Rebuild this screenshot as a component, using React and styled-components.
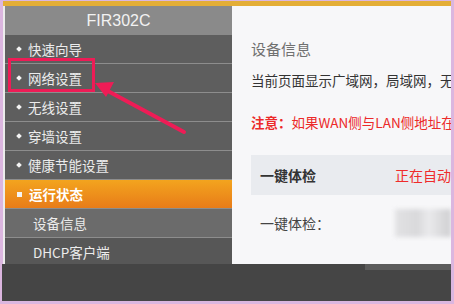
import React from "react";
import styled, { createGlobalStyle } from "styled-components";

const Global = createGlobalStyle`
  html, body { margin: 0; padding: 0; }
  body {
    width: 454px;
    height: 304px;
    overflow: hidden;
    background: #dbb6df;
    font-family: "Noto Sans CJK SC", "Liberation Sans", sans-serif;
  }
`;

const Frame = styled.div`
  position: relative;
  width: 454px;
  height: 304px;
  padding: 1px 3px 3px 3px;
  box-sizing: border-box;
  display: flex;
  flex-direction: column;
  overflow: hidden;
`;

const TopStrip = styled.div`
  height: 5px;
  background: #e4ae36;
  flex-shrink: 0;
`;

const Main = styled.div`
  flex: 1;
  display: flex;
  overflow: hidden;
`;

const Sidebar = styled.div`
  width: 227px;
  flex-shrink: 0;
  background: #5e5e5e;
  border-left: 2px solid #ececec;
  display: flex;
  flex-direction: column;
`;

const Brand = styled.div`
  height: 29px;
  background: #8a8a8a;
  color: #f2f2f2;
  font-family: "Liberation Sans", sans-serif;
  font-size: 16px;
  display: flex;
  align-items: center;
  justify-content: center;
`;

const Item = styled.div`
  height: 28px;
  border-bottom: 1px solid ${p => (p.$last ? "transparent" : "#8d8d8d")};
  background: ${p =>
    p.$active
      ? "linear-gradient(#f3a41e, #e87c19)"
      : p.$sub
      ? p.$light
        ? "#6b6b6b"
        : "#575757"
      : "#5e5e5e"};
  color: ${p => (p.$active ? "#fff" : "#ececec")};
  font-weight: ${p => (p.$active ? 700 : 400)};
  font-size: 13.5px;
  display: flex;
  align-items: center;
  padding-left: ${p => (p.$sub ? "28px" : "12px")};
  gap: 7px;
`;

const Bullet = styled.span`
  width: ${p => (p.$square ? "5px" : "4px")};
  height: ${p => (p.$square ? "5px" : "4px")};
  background: #f4f4f4;
  transform: ${p => (p.$square ? "none" : "rotate(45deg)")};
`;

const Content = styled.div`
  flex: 1;
  background: #f7f7f9;
  padding: 32px 0 0 19px;
  overflow: hidden;
  white-space: nowrap;
`;

const Title = styled.div`
  font-size: 15px;
  color: #707070;
  height: 22px;
  line-height: 22px;
`;

const Desc = styled.div`
  margin-top: 10px;
  font-size: 13.5px;
  color: #333;
  line-height: 20px;
`;

const Note = styled.div`
  margin-top: 22px;
  font-size: 13.5px;
  color: #ec2a2a;
  line-height: 20px;
  b { font-weight: 700; }
`;

const Table = styled.div`
  margin-top: 23px;
  display: flex;
  flex-direction: column;
  gap: 8px;
`;

const Row = styled.div`
  height: 40px;
  flex-shrink: 0;
  display: flex;
  align-items: center;
  padding-left: 9px;
  background: ${p => (p.$head ? "#e9ebef" : "transparent")};
  font-size: 14px;
  font-weight: ${p => (p.$head ? 700 : 400)};
  color: ${p => (p.$head ? "#333" : "#444")};
`;

const Label = styled.span`
  width: 135px;
  flex-shrink: 0;
`;

const Status = styled.span`
  color: #ef2b2b;
  font-weight: 400;
`;

const Blur = styled.span`
  width: 70px;
  height: 28px;
  background: linear-gradient(90deg, #e2e2e4, #d9d9db 40%, #eaeaec 60%, #cfcfd1);
  filter: blur(2px);
`;

const BottomBar = styled.div`
  position: absolute;
  left: 2px;
  right: 3px;
  top: 264px;
  height: 37px;
  background: #454545;
  &::after {
    content: "";
    position: absolute;
    right: 0;
    top: 0;
    width: 86px;
    height: 6px;
    background: #5c5c5c;
  }
`;

const Annotation = styled.svg`
  position: absolute;
  left: 0;
  top: 0;
  pointer-events: none;
`;

const menu = ["快速向导", "网络设置", "无线设置", "穿墙设置", "健康节能设置"];

export default function App() {
  return (
    <>
      <Global />
      <Frame>
        <TopStrip />
        <Main>
          <Sidebar>
            <Brand>FIR302C</Brand>
            {menu.map(m => (
              <Item key={m}>
                <Bullet />
                {m}
              </Item>
            ))}
            <Item $active>
              <Bullet $square />
              运行状态
            </Item>
            <Item $sub $light>设备信息</Item>
            <Item $sub $last>DHCP客户端</Item>
          </Sidebar>
          <Content>
            <Title>设备信息</Title>
            <Desc>当前页面显示广域网，局域网，无线网络等信息</Desc>
            <Note>
              <b>注意：</b>如果WAN侧与LAN侧地址在同一网段
            </Note>
            <Table>
              <Row $head>
                <Label>一键体检</Label>
                <Status>正在自动检测中</Status>
              </Row>
              <Row>
                <Label>一键体检：</Label>
                <Blur />
              </Row>
              <Row>
                <Label>运行状态</Label>
              </Row>
            </Table>
          </Content>
        </Main>
        <BottomBar />
        <Annotation width="454" height="304" viewBox="0 0 454 304">
          <rect x="9.5" y="59.5" width="84" height="31" fill="none" stroke="#ee1c56" strokeWidth="3" />
          <line x1="184" y1="132" x2="106" y2="90" stroke="#ee1c56" strokeWidth="4" strokeLinecap="round" />
          <polygon points="95,83 114,82 106,97" fill="#ee1c56" />
        </Annotation>
      </Frame>
    </>
  );
}
